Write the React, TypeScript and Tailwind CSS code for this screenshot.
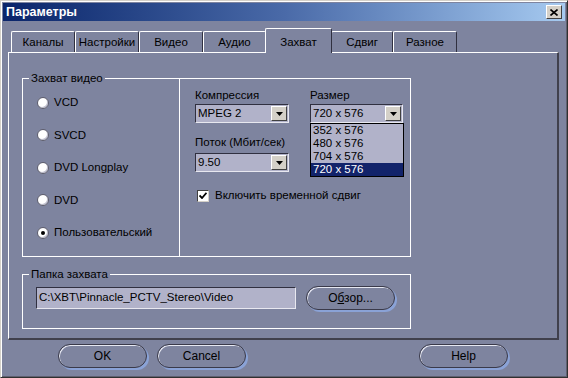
import React from 'react'

const tabs = [
    { label: 'Каналы', w: 64 },
    { label: 'Настройки', w: 64 },
    { label: 'Видео', w: 64 },
    { label: 'Аудио', w: 63 },
    { label: 'Захват', w: 67, active: true },
    { label: 'Сдвиг', w: 62 },
    { label: 'Разное', w: 64 },
]

const radios = ['VCD', 'SVCD', 'DVD Longplay', 'DVD', 'Пользовательский']
const sizes = ['352 x 576', '480 x 576', '704 x 576', '720 x 576']

const Arrow: React.FC = () => (
    <div className="w-[16px] h-[15px] bg-[#d4d0c8] border-t border-l border-t-white border-l-white border-r border-b border-r-[#404040] border-b-[#404040] flex items-center justify-center shrink-0">
        <svg width="7" height="4" viewBox="0 0 7 4"><path d="M0 0h7L3.5 4z" fill="#000" /></svg>
    </div>
)

const Combo: React.FC<{ value: string; w: number }> = ({ value, w }) => (
    <div className="h-[19px] flex items-center bg-[#b1b2c9] border-t border-l border-t-[#303040] border-l-[#303040] border-r border-b border-r-[#e8e8f0] border-b-[#e8e8f0] pr-[1px]" style={{ width: w }}>
        <span className="flex-1 pl-[2px] leading-none">{value}</span>
        <Arrow />
    </div>
)

const Radio: React.FC<{ checked?: boolean }> = ({ checked }) => (
    <div className="w-[12px] h-[12px] rounded-full bg-white border border-[#5a5a6a] shadow-[inset_-1px_-1px_0_#c0c0d0] flex items-center justify-center shrink-0">
        {checked && <div className="w-[4px] h-[4px] rounded-full bg-black" />}
    </div>
)

const PillBtn: React.FC<{ children: React.ReactNode; className?: string }> = ({ children, className }) => (
    <button className={`w-[89px] h-[24px] rounded-full border border-[#3a3a4a] bg-[#7e849f] shadow-[inset_1px_1px_0_#e6e8f2,2px_2px_0_#8aa2d6] text-black text-[12px] leading-none ${className || ''}`}>{children}</button>
)

export default function App() {
    return (
        <div className="w-[568px] h-[378px] bg-[#7e849f] border-t border-l border-t-[#d4d0c8] border-l-[#d4d0c8] border-r border-b border-r-[#303030] border-b-[#303030] shadow-[inset_1px_1px_0_#ffffff,inset_-1px_-1px_0_#606070] p-[2px] text-black text-[11.5px] overflow-hidden" style={{ fontFamily: '"Liberation Sans", Arial, sans-serif' }}>
            {/* title bar */}
            <div className="h-[18px] bg-gradient-to-r from-[#0a246a] via-[#4a6aa8] to-[#a6caf0] flex items-center pl-[3px] pr-[3px]">
                <span className="text-white font-bold text-[12.5px] leading-none">Параметры</span>
                <div className="ml-auto w-[16px] h-[14px] bg-[#d4d0c8] border-t border-l border-t-white border-l-white border-r border-b border-r-[#404040] border-b-[#404040] flex items-center justify-center">
                    <svg width="8" height="7" viewBox="0 0 8 7"><path d="M0.5 0.5L7.5 6.5M7.5 0.5L0.5 6.5" stroke="#000" strokeWidth="1.6" /></svg>
                </div>
            </div>

            {/* tabs */}
            <div className="ml-[5px] mt-[7px] w-[551px]">
                <div className="flex items-end pl-[3px] h-[24px]">
                    {tabs.map(t => (
                        <div key={t.label} style={{ width: t.w }} className={t.active
                            ? 'relative z-10 -mb-[1px] h-[25px] -mx-[1px] bg-[#7e849f] border-t border-l border-t-white border-l-white border-r border-r-[#303040] rounded-t-[2px] flex items-start pt-[5px] justify-center'
                            : 'h-[21px] border-t border-l border-t-white border-l-white border-r border-r-[#303040] rounded-t-[2px] flex items-center justify-center pt-[1px]'}>
                            {t.label}
                        </div>
                    ))}
                </div>

                {/* panel */}
                <div className="h-[288px] border-t border-l border-t-white border-l-white border-r-2 border-b-2 border-r-[#40404c] border-b-[#40404c] pl-[13px] pt-[25px]">
                    {/* capture group */}
                    <div className="relative w-[389px] h-[179px] border border-white flex">
                        <span className="absolute -top-[8px] left-[6px] px-[2px] bg-[#7e849f] leading-[14px]">Захват видео</span>
                        <div className="w-[157px] border-r border-white flex flex-col gap-[16.4px] pt-[16px] pl-[14px]">
                            {radios.map((r, i) => (
                                <div key={r} className="h-[16px] flex items-center gap-[5px]">
                                    <Radio checked={i === 4} />
                                    <span>{r}</span>
                                </div>
                            ))}
                        </div>
                        <div className="flex-1 pl-[15px] pt-[9px]">
                            <div className="flex gap-[21px]">
                                <div className="flex flex-col">
                                    <span className="h-[14px] leading-[14px]">Компрессия</span>
                                    <div className="mt-[2px]"><Combo value="MPEG 2" w={94} /></div>
                                    <span className="mt-[12px] h-[14px] leading-[14px]">Поток (Мбит/сек)</span>
                                    <div className="mt-[4px]"><Combo value="9.50" w={94} /></div>
                                </div>
                                <div className="relative flex flex-col">
                                    <span className="h-[14px] leading-[14px]">Размер</span>
                                    <div className="mt-[2px]"><Combo value="720 x 576" w={93} /></div>
                                    <div className="absolute left-0 top-[35px] w-[94px] border border-black bg-[#b1b2c9] z-20">
                                        {sizes.map((s, i) => (
                                            <div key={s} className={`h-[13px] leading-[13px] pl-[2px] ${i === 3 ? 'bg-[#12236a] text-white' : ''}`}>{s}</div>
                                        ))}
                                    </div>
                                </div>
                            </div>
                            <div className="mt-[15px] ml-[2px] flex items-center gap-[6px]">
                                <div className="w-[12px] h-[12px] bg-white border-t border-l border-t-[#404040] border-l-[#404040] border-r border-b border-r-[#d4d0c8] border-b-[#d4d0c8] flex items-center justify-center">
                                    <svg width="8" height="7" viewBox="0 0 8 7"><path d="M0.5 3.5L3 6L7.5 0.8" stroke="#000" strokeWidth="1.8" fill="none" /></svg>
                                </div>
                                <span>Включить временной сдвиг</span>
                            </div>
                        </div>
                    </div>

                    {/* folder group */}
                    <div className="relative mt-[17px] w-[389px] h-[55px] border border-white flex items-start pt-[12px] pl-[13px]">
                        <span className="absolute -top-[8px] left-[6px] px-[2px] bg-[#7e849f] leading-[14px]">Папка захвата</span>
                        <div className="w-[260px] h-[22px] bg-[#b1b2c9] border-t border-l border-t-[#303040] border-l-[#303040] border-r border-b border-r-[#e8e8f0] border-b-[#e8e8f0] flex items-center pl-[2px]">
                            C:\XBT\Pinnacle_PCTV_Stereo\Video
                        </div>
                        <PillBtn className="ml-[10px] -mt-[1px]">О<span className="underline">б</span>зор...</PillBtn>
                    </div>
                </div>
            </div>

            {/* bottom buttons */}
            <div className="mt-[4px] flex items-center pl-[55px] pr-[57px]">
                <PillBtn>OK</PillBtn>
                <PillBtn className="ml-[10px]">Cancel</PillBtn>
                <PillBtn className="ml-auto">Help</PillBtn>
            </div>
        </div>
    )
}
